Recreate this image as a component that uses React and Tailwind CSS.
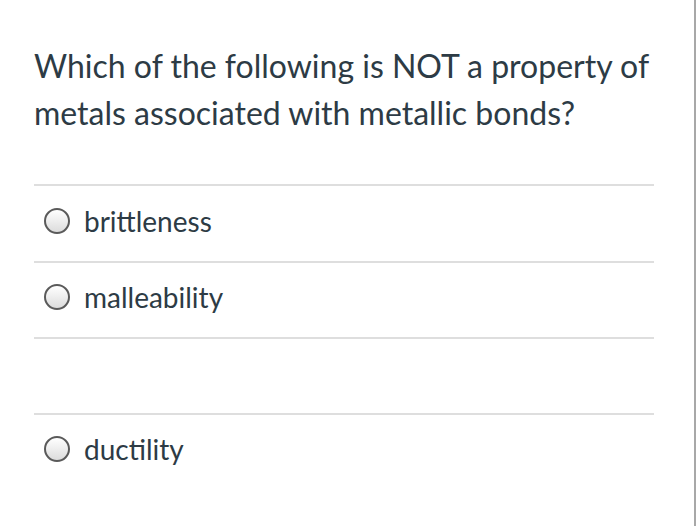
const options = ['brittleness', 'malleability', '', 'ductility'];

const Radio = () => (
    <span className="block h-[26px] w-[26px] shrink-0 rounded-full border-2 border-[#5a5a5a] bg-gradient-to-b from-white to-[#dcdcdc]" />
);

export default function App() {
    return (
        <div className="h-[526px] w-full border-r-2 border-[#a8a8a8] bg-white font-['Lato','Liberation_Sans',sans-serif] text-[#2d3b45]">
            <div className="pl-[34px] pr-[40px] pt-[42px]">
                <p className="text-[32px] leading-[47px]">
                    Which of the following is NOT a property of metals associated with metallic bonds?
                </p>
                <div className="mt-[48px]">
                    {options.map((opt, i) => (
                        <div key={i} className={`flex items-center gap-[14px] border-t-2 border-[#dedede] pb-[6px] pl-[10px] ${i === 0 ? 'h-[77px]' : 'h-[76px]'}`}>
                            {opt && (
                                <>
                                    <Radio />
                                    <span className="text-[28px]">{opt}</span>
                                </>
                            )}
                        </div>
                    ))}
                </div>
            </div>
        </div>
    );
}
